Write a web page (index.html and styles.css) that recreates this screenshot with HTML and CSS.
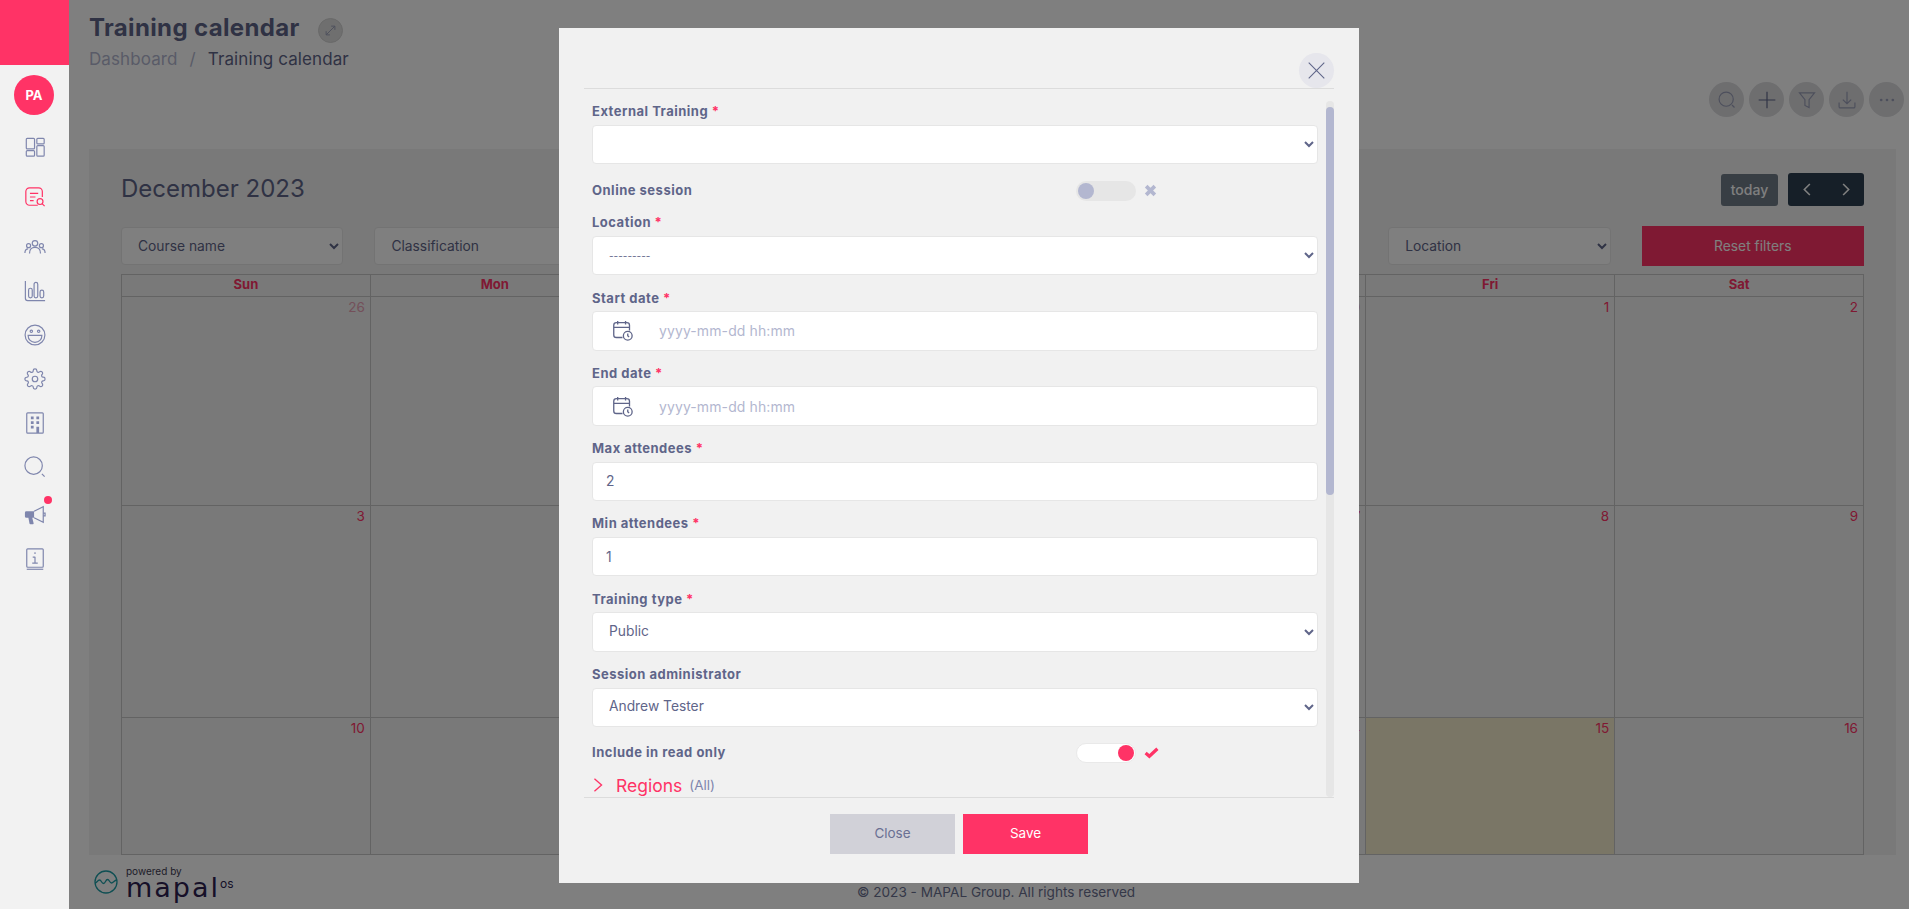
FILE: index.html
```html
<!DOCTYPE html>
<html lang="en">
<head>
  <meta charset="UTF-8">
  <meta name="viewport" content="width=device-width, initial-scale=1.0">
  <title>Training calendar</title>
  <link rel="stylesheet" href="styles.css">
</head>
<body>
  <!-- Sidebar -->
  <aside class="sidebar">
    <div class="brand"></div>
    <div class="avatar">PA</div>
    <nav class="nav">
      <a class="nav-item"><svg class="nav-icon" viewBox="0 0 24 24"><rect x="2.5" y="2.5" width="9" height="11.5" rx="1"/><rect x="2.5" y="16" width="9" height="6" rx="1"/><rect x="14" y="2.5" width="8" height="6" rx="1"/><rect x="14" y="10.5" width="8" height="11.5" rx="1"/></svg></a>
      <a class="nav-item nav-item-spaced"><svg class="nav-icon nav-icon-active" viewBox="0 0 24 24"><path d="M15 21H6a4 4 0 0 1-4-4V6a4 4 0 0 1 4-4h10a4 4 0 0 1 4 4v6"/><path d="M6.5 8h9M6.5 12h6M6.5 16h4"/><circle cx="17.5" cy="17" r="3.2"/><path d="M20 19.5l2.5 2.5"/></svg></a>
      <a class="nav-item nav-item-spaced"><svg class="nav-icon" viewBox="0 0 24 24"><circle cx="12" cy="8" r="3"/><circle cx="5" cy="10.5" r="2.2"/><circle cx="19" cy="10.5" r="2.2"/><path d="M6 19c0-4 2.500-6.500 6-6.500s6 2.500 6 6.500M1 18.500c0-2.500 1.500-4.500 3.500-4.500M23 18.500c0-2.500-1.500-4.500-3.500-4.500"/></svg></a>
      <a class="nav-item"><svg class="nav-icon" viewBox="0 0 24 24"><path d="M1.500 1v19a2.500 2.500 0 0 0 2.500 2.500h19"/><rect x="5" y="9" width="4" height="10.500" rx="2"/><rect x="11" y="2.500" width="4" height="17" rx="2"/><rect x="17.500" y="11" width="4" height="8.500" rx="2"/></svg></a>
      <a class="nav-item"><svg class="nav-icon" viewBox="0 0 24 24"><circle cx="12" cy="12" r="10.800"/><circle cx="8" cy="8" r="1.300"/><circle cx="16" cy="8" r="1.300"/><path d="M4.500 12.500h15c0 4.500-3.200 7.500-7.500 7.500s-7.500-3-7.500-7.500z"/></svg></a>
      <a class="nav-item"><svg class="nav-icon" viewBox="0 0 24 24"><circle cx="12" cy="12" r="3"/><path d="M19.400 15a1.650 1.650 0 0 0 .33 1.820l.06.06a2 2 0 0 1 0 2.830 2 2 0 0 1-2.830 0l-.06-.06a1.650 1.650 0 0 0-1.820-.33 1.650 1.650 0 0 0-1 1.510V21a2 2 0 0 1-2 2 2 2 0 0 1-2-2v-.09A1.650 1.650 0 0 0 9 19.400a1.650 1.650 0 0 0-1.820.33l-.06.06a2 2 0 0 1-2.830 0 2 2 0 0 1 0-2.830l.06-.06a1.650 1.650 0 0 0 .33-1.820 1.650 1.650 0 0 0-1.510-1H3a2 2 0 0 1-2-2 2 2 0 0 1 2-2h.09A1.650 1.650 0 0 0 4.600 9a1.650 1.650 0 0 0-.33-1.820l-.06-.06a2 2 0 0 1 0-2.830 2 2 0 0 1 2.830 0l.06.06a1.650 1.650 0 0 0 1.820.33H9a1.650 1.650 0 0 0 1-1.510V3a2 2 0 0 1 2-2 2 2 0 0 1 2 2v.09a1.650 1.650 0 0 0 1 1.510 1.650 1.650 0 0 0 1.820-.33l.06-.06a2 2 0 0 1 2.830 0 2 2 0 0 1 0 2.830l-.06.06a1.650 1.650 0 0 0-.33 1.820V9a1.650 1.650 0 0 0 1.510 1H21a2 2 0 0 1 2 2 2 2 0 0 1-2 2h-.09a1.650 1.650 0 0 0-1.510 1z"/></svg></a>
      <a class="nav-item"><svg class="nav-icon" viewBox="0 0 24 24"><rect x="3" y="1" width="18" height="22" rx="1"/><path class="nav-fill" d="M7.500 5h3v3h-3zM13.500 5h3v3h-3zM7.500 10h3v3h-3zM13.500 10h3v3h-3zM7.500 15h3v3h-3zM13.500 16h3v7h-3z"/></svg></a>
      <a class="nav-item"><svg class="nav-icon" viewBox="0 0 24 24"><circle cx="10.500" cy="10.500" r="9.500"/><path d="M19.500 19.500l3 3"/></svg></a>
      <a class="nav-item nav-item-notify"><svg class="nav-icon" viewBox="0 0 24 24"><path d="M11 8l10-5v17l-10-5"/><path d="M21 10h2v3h-2"/><path class="nav-fill" d="M1 9.500a1.500 1.500 0 0 1 1.500-1.500H11v7H9l1.500 6a1 1 0 0 1-1 1.200H7a1 1 0 0 1-1-.8L4.800 15H2.500A1.500 1.500 0 0 1 1 13.500z"/></svg><span class="nav-dot"></span></a>
      <a class="nav-item"><svg class="nav-icon" viewBox="0 0 24 24"><rect x="3" y="1" width="18" height="20" rx="1"/><path d="M3 23.200h18"/><path d="M12 9.500v7M9.500 10h2.500M9 16.500h6M12 4.500v2"/></svg></a>
    </nav>
  </aside>

  <!-- Page behind the dialog -->
  <main class="page">
    <header class="page-head">
      <div>
        <div class="title-row">
          <h1>Training calendar</h1>
          <span class="expand"><svg viewBox="0 0 24 24"><path d="M5 19L19 5M13 5h6v6M5 13v6h6"/></svg></span>
        </div>
        <div class="crumbs"><span class="crumb-link">Dashboard</span><span class="crumb-sep">/</span><span>Training calendar</span></div>
      </div>
      <div class="actions">
        <span class="action"><svg viewBox="0 0 24 24"><circle cx="11" cy="11" r="8.500"/><path d="M18 18l3 3"/></svg></span>
        <span class="action action-dark"><svg viewBox="0 0 24 24"><path d="M12 2v20M2 12h20"/></svg></span>
        <span class="action"><svg viewBox="0 0 24 24"><path d="M3 3.500h18l-6.500 8V21l-5-2.500v-7z"/></svg></span>
        <span class="action"><svg viewBox="0 0 24 24"><path d="M12 2v14M7 11.500l5 5 5-5M2.500 15v5a1.500 1.500 0 0 0 1.500 1.500h16a1.500 1.500 0 0 0 1.500-1.500v-5"/></svg></span>
        <span class="action"><svg viewBox="0 0 24 24"><circle class="dot" cx="5" cy="12" r="1.600"/><circle class="dot" cx="12" cy="12" r="1.600"/><circle class="dot" cx="19" cy="12" r="1.600"/></svg></span>
      </div>
    </header>

    <section class="card">
      <div class="toolbar">
        <h2>December 2023</h2>
        <div class="toolbar-btns">
          <button class="btn-today">today</button>
          <div class="btn-nav">
            <svg viewBox="0 0 24 24"><path d="M15 5l-7 7 7 7"/></svg>
            <svg viewBox="0 0 24 24"><path d="M9 5l7 7-7 7"/></svg>
          </div>
        </div>
      </div>

      <div class="filters">
        <select><option>Course name</option></select>
        <select><option>Classification</option></select>
        <select><option>Instructor</option></select>
        <select><option>Status</option></select>
        <select><option>Training type</option></select>
        <select><option>Location</option></select>
        <button class="btn-reset">Reset filters</button>
      </div>

      <div class="calendar">
        <div class="day-name">Sun</div><div class="day-name">Mon</div><div class="day-name">Tue</div><div class="day-name">Wed</div><div class="day-name">Thu</div><div class="day-name">Fri</div><div class="day-name">Sat</div>
        <div class="day day-other">26</div><div class="day day-other">27</div><div class="day day-other">28</div><div class="day day-other">29</div><div class="day day-other">30</div><div class="day">1</div><div class="day">2</div>
        <div class="day">3</div><div class="day">4</div><div class="day">5</div><div class="day">6</div><div class="day">7</div><div class="day">8</div><div class="day">9</div>
        <div class="day">10</div><div class="day">11</div><div class="day">12</div><div class="day">13</div><div class="day">14</div><div class="day day-today">15</div><div class="day">16</div>
      </div>
    </section>

    <footer class="page-foot">
      <div class="logo">
        <svg class="logo-mark" viewBox="0 0 24 24"><circle cx="12" cy="12" r="11"/><path d="M1 13c2 0 2.500-3 4.500-3s2 3.500 4 3.500 2-4 4-4 2 3.500 4 3.500 2.500-3 5.500-3"/></svg>
        <div class="logo-text">
          <span class="logo-by">powered by</span>
          <span class="logo-name">mapal<sup>os</sup></span>
        </div>
      </div>
      <p class="copyright">© 2023 - MAPAL Group. All rights reserved</p>
    </footer>
  </main>

  <!-- Dialog -->
  <div class="overlay">
    <div class="modal">
      <div class="modal-head">
        <button class="modal-close"><svg viewBox="0 0 24 24"><path d="M1 1l22 22M23 1L1 23"/></svg></button>
      </div>

      <div class="modal-body">
        <form class="form">
          <div class="field">
            <label>External Training <i>*</i></label>
            <select><option></option></select>
          </div>
          <div class="switch-row switch-row-online">
            <label>Online session</label>
            <div class="switch-wrap">
              <span class="switch"><span class="knob"></span></span>
              <svg class="mark mark-off" viewBox="0 0 12 12"><path d="M2 2l8 8M10 2l-8 8"/></svg>
            </div>
          </div>
          <div class="field">
            <label>Location <i>*</i></label>
            <select class="select-dashes"><option>---------</option></select>
          </div>
          <div class="field">
            <label>Start date <i>*</i></label>
            <div class="date-input">
              <svg class="date-icon" viewBox="0 0 24 24"><path d="M12 20H5a3 3 0 0 1-3-3V6a3 3 0 0 1 3-3h12a3 3 0 0 1 3 3v6M2 8.500h18M6.500 1v4M15.500 1v4"/><circle cx="18" cy="18" r="5"/><path d="M18 15.500V18l1.500 1.500"/></svg>
              <input type="text" placeholder="yyyy-mm-dd hh:mm">
            </div>
          </div>
          <div class="field">
            <label>End date <i>*</i></label>
            <div class="date-input">
              <svg class="date-icon" viewBox="0 0 24 24"><path d="M12 20H5a3 3 0 0 1-3-3V6a3 3 0 0 1 3-3h12a3 3 0 0 1 3 3v6M2 8.500h18M6.500 1v4M15.500 1v4"/><circle cx="18" cy="18" r="5"/><path d="M18 15.500V18l1.500 1.500"/></svg>
              <input type="text" placeholder="yyyy-mm-dd hh:mm">
            </div>
          </div>
          <div class="field">
            <label>Max attendees <i>*</i></label>
            <input type="text" value="2">
          </div>
          <div class="field">
            <label>Min attendees <i>*</i></label>
            <input type="text" value="1">
          </div>
          <div class="field">
            <label>Training type <i>*</i></label>
            <select><option>Public</option></select>
          </div>
          <div class="field">
            <label>Session administrator</label>
            <select><option>Andrew Tester</option></select>
          </div>
          <div class="switch-row">
            <label>Include in read only</label>
            <div class="switch-wrap">
              <span class="switch switch-on"><span class="knob"></span></span>
              <svg class="mark mark-on" viewBox="0 0 14 12"><path d="M1.500 6.500l3.500 3 7.500-7"/></svg>
            </div>
          </div>
          <div class="section-row">
            <svg viewBox="0 0 12 18"><path d="M2 2l8 7-8 7"/></svg>
            <span class="section-name">Regions</span>
            <span class="section-note">(All)</span>
          </div>
        </form>
        <div class="scroll-rail"><div class="scroll-thumb"></div></div>
      </div>

      <div class="modal-foot">
        <button class="btn-close">Close</button>
        <button class="btn-save">Save</button>
      </div>
    </div>
  </div>
</body>
</html>
```

FILE: styles.css
```css
* {
  box-sizing: border-box;
}
html, body {
  height: 100%;
}
body {
  margin: 0;
  display: flex;
  overflow: hidden;
  background-color: #fff;
  font-family: Inter, "Noto Sans", sans-serif;
  color: #5f6589;
}
button, select, input {
  font-family: inherit;
}

/* Sidebar */
.sidebar {
  width: 69px;
  flex-shrink: 0;
  height: 909px;
  background-color: #f2f2f2;
  position: relative;
  z-index: 3;
}
.brand {
  height: 65px;
  background-color: #ff3366;
}
.avatar {
  width: 40px;
  height: 40px;
  margin: 10px 0 10px 14px;
  border-radius: 50%;
  background-color: #ff3366;
  color: #fff;
  font-size: 13px;
  font-weight: 700;
  display: flex;
  align-items: center;
  justify-content: center;
}
.nav {
  display: flex;
  flex-direction: column;
}
.nav-item {
  height: 44px;
  display: flex;
  align-items: center;
  justify-content: center;
  position: relative;
}
.nav-item-spaced {
  margin-top: 6px;
}
.nav-item-notify {
  margin-top: 4px;
}
.nav-icon {
  width: 22px;
  height: 22px;
  fill: none;
  stroke: #7f86ad;
  stroke-width: 1.3;
}
.nav-icon-active {
  stroke: #ff3366;
}
.nav-fill {
  fill: #7f86ad;
  stroke: none;
}
.nav-dot {
  position: absolute;
  left: 44px;
  top: 3px;
  width: 8px;
  height: 8px;
  border-radius: 50%;
  background-color: #ff3366;
}

/* Page */
.page {
  flex: 1;
  height: 909px;
  padding: 0 5px 0 20px;
  display: flex;
  flex-direction: column;
}
.page-head {
  height: 149px;
  flex-shrink: 0;
  display: flex;
  justify-content: space-between;
}
.title-row {
  display: flex;
  align-items: center;
  margin-top: 13px;
}
h1 {
  margin: 0;
  font-size: 24px;
  line-height: 30px;
  font-weight: 700;
  letter-spacing: 0.35px;
}
.expand {
  width: 25px;
  height: 25px;
  margin: 4px 0 0 18px;
  border-radius: 50%;
  background-color: #dedede;
  border: 1px solid #d2d2d2;
  display: flex;
  align-items: center;
  justify-content: center;
}
.expand svg {
  width: 15px;
  height: 15px;
  fill: none;
  stroke: #9a9fb8;
  stroke-width: 1.5;
}
.crumbs {
  margin-top: 5px;
  font-size: 17px;
  line-height: 22px;
  letter-spacing: 0.1px;
}
.crumb-link {
  color: #b3b7d0;
}
.crumb-sep {
  margin: 0 12px;
  color: #b3b7d0;
}
.actions {
  display: flex;
  gap: 5px;
  margin-top: 82px;
}
.action {
  width: 35px;
  height: 35px;
  border-radius: 50%;
  background-color: #dcdcdf;
  display: flex;
  align-items: center;
  justify-content: center;
}
.action svg {
  width: 20px;
  height: 20px;
  fill: none;
  stroke: #9a9fb8;
  stroke-width: 1.4;
}
.action-dark svg {
  stroke: #5f6589;
}
.action .dot {
  fill: #9a9fb8;
  stroke: none;
}

/* Calendar card */
.card {
  flex: 1;
  min-height: 0;
  margin-right: 8px;
  padding: 24px 32px 0;
  background-color: #f2f2f2;
  display: flex;
  flex-direction: column;
  overflow: hidden;
}
.toolbar {
  display: flex;
  justify-content: space-between;
  align-items: center;
  height: 33px;
}
h2 {
  margin: -3px 0 0;
  font-size: 24px;
  font-weight: 400;
}
.toolbar-btns {
  display: flex;
  align-items: center;
  gap: 10px;
}
.btn-today {
  width: 57px;
  height: 32px;
  padding: 0;
  border: 0;
  border-radius: 3px;
  background-color: #717d89;
  color: #fff;
  font-size: 14px;
  font-weight: 500;
}
.btn-nav {
  width: 76px;
  height: 33px;
  border-radius: 3px;
  background-color: #2c3e50;
  display: flex;
  align-items: center;
  justify-content: space-around;
}
.btn-nav svg {
  width: 19px;
  height: 19px;
  fill: none;
  stroke: #fff;
  stroke-width: 2;
}
.filters {
  display: grid;
  grid-template-columns: repeat(7, 1fr);
  gap: 31px;
  margin-top: 20px;
  height: 40px;
  align-items: center;
}
.filters select {
  width: 100%;
  height: 38px;
  padding: 0 0 1px 12px;
  background-color: #fff;
  border: 1px solid #e6e6e6;
  border-radius: 4px;
  color: #5f6589;
  font-size: 13.800px;
}
.btn-reset {
  height: 40px;
  border: 0;
  padding-bottom: 2px;
  background-color: #ff3366;
  color: #fff;
  font-size: 13.800px;
}
.calendar {
  flex: 1;
  min-height: 0;
  margin-top: 8px;
  display: grid;
  grid-template-columns: repeat(7, 1fr);
  grid-template-rows: 22px 209px 212px 1fr;
  border-top: 1px solid #c6c6c6;
  border-left: 1px solid #c6c6c6;
}
.day-name, .day {
  border-right: 1px solid #c6c6c6;
  border-bottom: 1px solid #c6c6c6;
  color: #ff3366;
}
.day-name {
  text-align: center;
  font-size: 13px;
  font-weight: 700;
  line-height: 18px;
}
.day {
  padding: 0 5px 0 0;
  text-align: right;
  font-size: 13.500px;
  line-height: 20px;
}
.day-other {
  color: #e8a0b4;
}
.day-today {
  background-color: #f5edcd;
}
.page-foot {
  height: 54px;
  flex-shrink: 0;
  display: flex;
  align-items: center;
}
.logo {
  display: flex;
  align-items: center;
  gap: 8px;
  margin-left: 5px;
  width: 142px;
  flex-shrink: 0;
}
.logo-mark {
  width: 24px;
  height: 24px;
  fill: none;
  stroke: #1e9ea6;
  stroke-width: 1.3;
}
.logo-text {
  display: flex;
  flex-direction: column;
}
.logo-by {
  font-size: 10px;
  line-height: 12px;
  color: #3d3a52;
}
.logo-name {
  font-family: "DejaVu Sans", sans-serif;
  font-size: 27px;
  line-height: 22px;
  color: #2c2150;
  letter-spacing: 2px;
  white-space: nowrap;
}
.logo-name sup {
  font-family: Inter, sans-serif;
  font-size: 12px;
  letter-spacing: 0;
  line-height: 0;
  vertical-align: 9px;
}
.copyright {
  margin: 0 0 0 621px;
  font-size: 13.600px;
  padding-top: 20px;
  color: #6a7090;
}

/* Dialog */
.overlay {
  position: fixed;
  inset: 0;
  z-index: 2;
  background-color: rgba(0, 0, 0, 0.5);
  padding: 28px 0 0 559px;
}
.modal {
  width: 800px;
  height: 855px;
  padding: 0 25px;
  background-color: #f1f1f1;
  display: flex;
  flex-direction: column;
}
.modal-head {
  height: 60.500px;
  flex-shrink: 0;
  display: flex;
  justify-content: flex-end;
  align-items: flex-end;
  border-bottom: 1px solid #dcdcdc;
}
.modal-close {
  width: 35px;
  height: 35px;
  padding: 0;
  border: 0;
  border-radius: 50%;
  background-color: #e6e6ec;
  display: flex;
  align-items: center;
  justify-content: center;
}
.modal-close svg {
  width: 17px;
  height: 17px;
  fill: none;
  stroke: #5f6589;
  stroke-width: 1.5;
}
.modal-body {
  flex: 1;
  min-height: 0;
  overflow: hidden;
  display: flex;
  border-bottom: 1px solid #dcdcdc;
}
.scroll-rail {
  width: 8px;
  flex-shrink: 0;
  margin-top: 12px;
  padding-top: 6px;
  background-color: #e6e6e6;
  border-radius: 4px;
}
.scroll-thumb {
  height: 388px;
  background-color: #b3b7d0;
  border-radius: 4px;
}
.form {
  flex: 1;
  min-width: 0;
  padding: 12.500px 8px 0;
}
.form label {
  display: block;
  font-size: 13px;
  line-height: 21px;
  font-weight: 700;
  letter-spacing: 0.5px;
}
.form label i {
  color: #ff3366;
  font-style: normal;
}
.field {
  margin-bottom: 12.300px;
}
.field label {
  margin-bottom: 2.500px;
}
.field select, .field input, .date-input {
  width: 100%;
  height: 39.500px;
  background-color: #fff;
  border: 1px solid #e6e6e6;
  border-radius: 4px;
  color: #5f6589;
  font-size: 13.800px;
  outline: none;
}
.field select {
  padding-left: 12px;
  padding-bottom: 2px;
}
.field .select-dashes {
  font-size: 10px;
  padding-bottom: 0;
}
.field input {
  padding-left: 13px;
}
.date-input {
  display: flex;
  align-items: center;
}
.date-input input {
  border: 0;
  height: 100%;
  padding-left: 26px;
  background: none;
  font-size: 14px;
  letter-spacing: 0.1px;
}
.date-input input::placeholder {
  color: #b3b7d0;
}
.date-icon {
  width: 21px;
  height: 21px;
  margin-left: 19px;
  flex-shrink: 0;
  fill: none;
  stroke: #5f6589;
  stroke-width: 1.5;
}
.switch-row {
  height: 36px;
  padding-bottom: 9px;
  display: grid;
  grid-template-columns: 484px 1fr;
  align-items: center;
}
.switch-row-online {
  padding-bottom: 7.500px;
}
.switch-wrap {
  display: flex;
  align-items: center;
}
.switch {
  width: 60px;
  height: 20px;
  padding: 2px;
  border-radius: 10px;
  background-color: #e6e6e6;
  display: flex;
}
.knob {
  width: 16px;
  height: 16px;
  border-radius: 50%;
  background-color: #b3b7d0;
}
.switch-on {
  justify-content: flex-end;
  background-color: #fff;
  border: 1px solid #e9e9e9;
  padding: 1px;
}
.switch-on .knob {
  background-color: #ff3366;
}
.mark {
  margin-left: 8px;
  fill: none;
}
.mark-off {
  width: 13px;
  height: 13px;
  stroke: #b3b7d0;
  stroke-width: 3.400;
}
.mark-on {
  width: 15px;
  height: 13px;
  stroke: #ff3366;
  stroke-width: 3;
}
.section-row {
  height: 24px;
  margin-top: -2px;
  display: flex;
  align-items: center;
}
.section-row svg {
  width: 12px;
  height: 16px;
  fill: none;
  stroke: #ff3366;
  stroke-width: 1.500;
}
.section-name {
  margin-left: 12px;
  color: #ff3366;
  font-size: 17.500px;
}
.section-note {
  margin-left: 7px;
  color: #7f86ad;
  font-size: 13.500px;
}
.modal-foot {
  height: 85px;
  flex-shrink: 0;
  padding-top: 16px;
  display: flex;
  justify-content: center;
  gap: 8px;
}
.modal-foot button {
  width: 125px;
  height: 40px;
  border: 0;
  padding-bottom: 4px;
  font-size: 13.500px;
}
.btn-close {
  background-color: #d1d1d8;
  color: #6a7093;
}
.btn-save {
  background-color: #ff3366;
  color: #fff;
}
```
